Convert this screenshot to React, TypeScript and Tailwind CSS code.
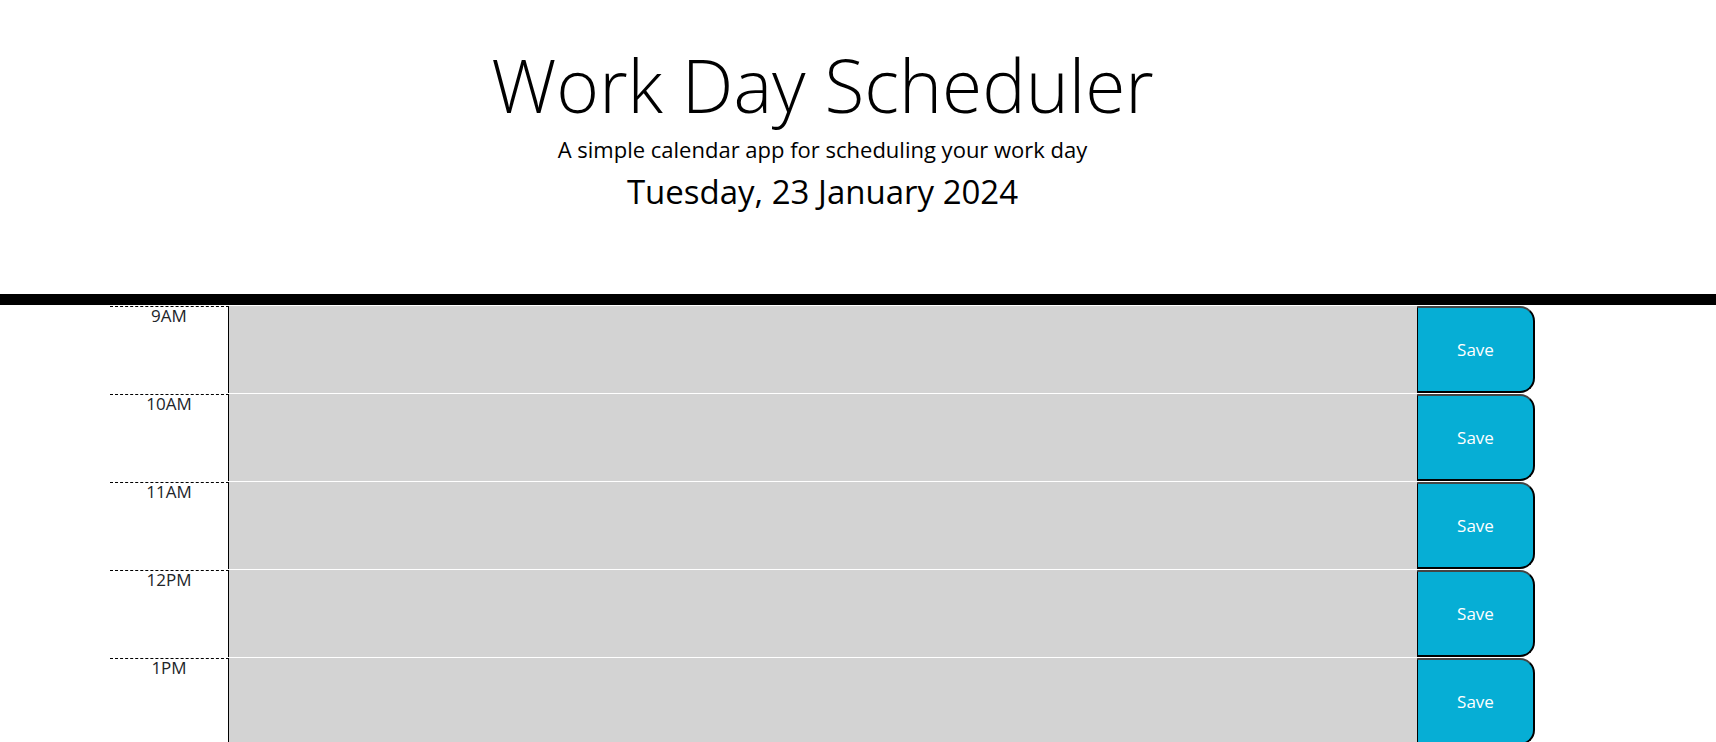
const hours = ["9AM", "10AM", "11AM", "12PM", "1PM", "2PM", "3PM", "4PM", "5PM"];

export default function App() {
  return (
    <div className="min-h-screen bg-white text-black" style={{ fontFamily: '"Open Sans", "Liberation Sans", sans-serif' }}>
      <header className="h-[305px] border-b-[11px] border-black">
        <div className="ml-[110px] w-[1425px] pt-[41px] text-center">
          <h1 className="text-[73px] font-light leading-[87px]">Work Day Scheduler</h1>
          <p className="mt-[6px] text-[22px] font-normal leading-[30px]">
            A simple calendar app for scheduling your work day
          </p>
          <p className="mt-[4px] text-[33px] font-normal leading-[48px]">Tuesday, 23 January 2024</p>
        </div>
      </header>

      <main className="ml-[110px] w-[1425px]">
        {hours.map((hour) => (
          <div key={hour} className="flex h-[88px] border-t border-white">
            <div className="w-[119px] border-t border-dashed border-black text-center text-[17px] leading-[17px] text-[#212529]">
              <div className="h-full border-r border-solid border-black">{hour}</div>
            </div>
            <textarea className="h-full flex-1 resize-none bg-[#d3d3d3] p-[10px] text-black outline-none" />
            <button className="h-full w-[118px] rounded-r-[15px] border-t-2 border-r-2 border-b-2 border-l border-t-[#444] border-r-black border-b-black border-l-black bg-[#06aed5] text-[17px] text-white">
              Save
            </button>
          </div>
        ))}
      </main>
    </div>
  );
}
